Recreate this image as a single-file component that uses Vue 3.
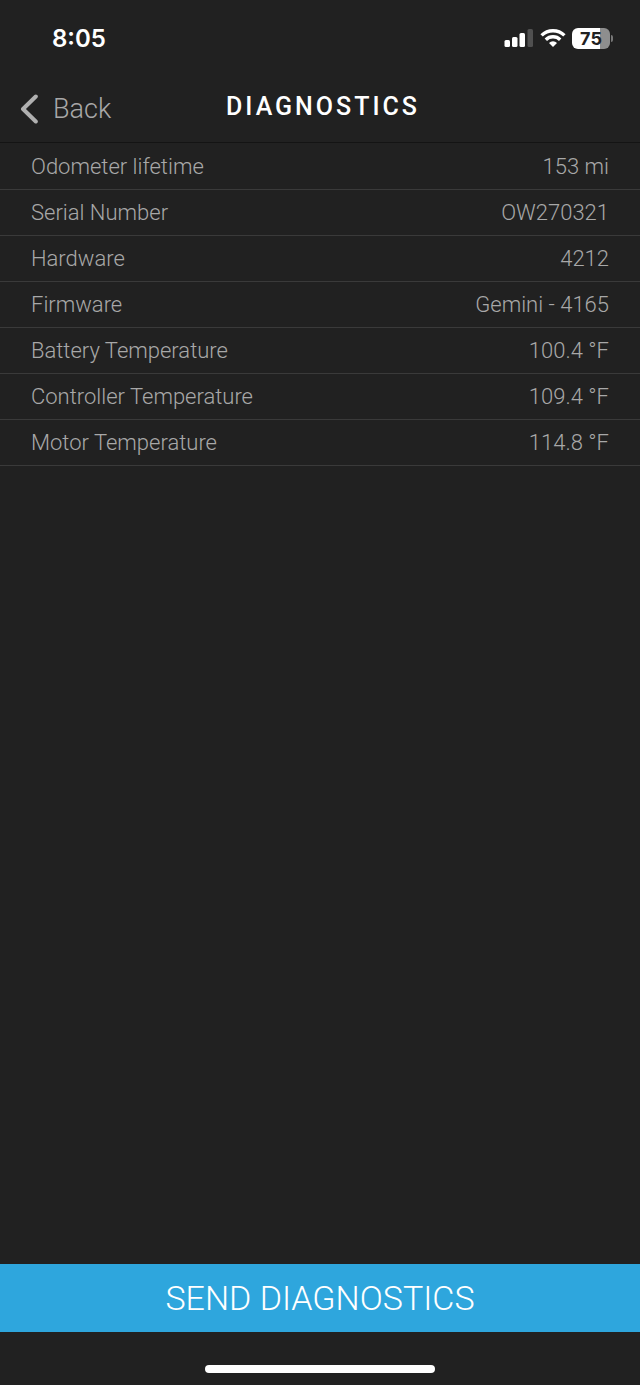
<template>
  <div class="diagnostics-page">
    <div class="status-bar">
      <span class="status-time">8:05</span>
      <div class="status-icons">
        <svg class="signal-icon" width="30" height="20" viewBox="0 0 30 20" aria-hidden="true">
          <rect x="0.5" y="12" width="5.5" height="7" rx="1.5" fill="#fff" />
          <rect x="8" y="9" width="5.5" height="10" rx="1.5" fill="#fff" />
          <rect x="15.5" y="5" width="5.5" height="14" rx="1.5" fill="#fff" />
          <rect x="23.5" y="1" width="5.5" height="18" rx="1.5" fill="#505050" />
        </svg>
        <svg class="wifi-icon" width="26" height="20" viewBox="0 0 26 20" aria-hidden="true">
          <g fill="none" stroke="#fff" stroke-width="3.4">
            <path d="M1.6 7.4a16.2 16.2 0 0 1 22.8 0" />
            <path d="M5.8 11.8a10.2 10.2 0 0 1 14.4 0" />
          </g>
          <path d="M13 19l-4-4a5.7 5.7 0 0 1 8 0z" fill="#fff" />
        </svg>
        <div class="battery">
          <span class="battery-body">{{ batteryLevel }}</span>
          <span class="battery-cap"></span>
        </div>
      </div>
    </div>

    <header class="nav-bar">
      <button type="button" class="back-button">
        <svg width="18" height="30" viewBox="0 0 18 30" aria-hidden="true">
          <path
            d="M15.8 2.5L3 15l12.8 12.5"
            fill="none"
            stroke="#b0b0b0"
            stroke-width="4"
            stroke-linecap="round"
            stroke-linejoin="round"
          />
        </svg>
        <span>Back</span>
      </button>
      <h1>DIAGNOSTICS</h1>
    </header>

    <dl class="info-list">
      <div v-for="item in items" :key="item.label" class="info-row">
        <dt>{{ item.label }}</dt>
        <dd>{{ item.value }}</dd>
      </div>
    </dl>

    <footer class="page-footer">
      <button type="button" class="send-button">SEND DIAGNOSTICS</button>
      <div class="home-indicator"></div>
    </footer>
  </div>
</template>

<script setup>
import { ref } from 'vue'

const batteryLevel = ref(75)

const items = ref([
  { label: 'Odometer lifetime', value: '153 mi' },
  { label: 'Serial Number', value: 'OW270321' },
  { label: 'Hardware', value: '4212' },
  { label: 'Firmware', value: 'Gemini - 4165' },
  { label: 'Battery Temperature', value: '100.4 °F' },
  { label: 'Controller Temperature', value: '109.4 °F' },
  { label: 'Motor Temperature', value: '114.8 °F' },
])
</script>

<style>
body {
  margin: 0;
  background-color: #212121;
}
</style>

<style scoped>
.diagnostics-page {
  display: flex;
  flex-direction: column;
  min-height: 100vh;
  background-color: #212121;
  color: #a8a8a8;
  font-family: Roboto, 'Liberation Sans', sans-serif;
  font-weight: 300;
}

.status-bar {
  display: flex;
  align-items: center;
  justify-content: space-between;
  height: 76px;
  padding: 0 27px 0 52px;
}

.status-time {
  color: #fff;
  font-family: Inter, 'Liberation Sans', sans-serif;
  font-size: 24px;
  font-weight: 600;
}

.status-icons {
  display: flex;
  align-items: center;
  gap: 6px;
}

.battery {
  display: flex;
  align-items: center;
  gap: 1px;
}

.battery-body {
  width: 38px;
  height: 21px;
  border-radius: 6px;
  background: linear-gradient(to right, #fff 75%, #8e8e8e 75%);
  color: #212121;
  font-family: Inter, 'Liberation Sans', sans-serif;
  font-size: 18px;
  font-weight: 700;
  line-height: 21px;
  text-align: center;
}

.battery-cap {
  width: 2px;
  height: 7px;
  border-radius: 0 2px 2px 0;
  background-color: #777;
}

.nav-bar {
  display: grid;
  grid-template-columns: 1fr auto 1fr;
  align-items: center;
  height: 66px;
  padding: 0 20px;
  border-bottom: 1px solid #141414;
}

.back-button {
  display: flex;
  align-items: center;
  justify-self: start;
  gap: 15px;
  padding: 0;
  border: none;
  background: none;
  color: #a8a8a8;
  font-family: inherit;
  font-size: 27px;
  font-weight: 300;
  line-height: 32px;
  cursor: pointer;
}

/* left padding balances the tracking after the last letter */
.nav-bar h1 {
  margin: 0;
  padding: 0 0 4px 6px;
  color: #fff;
  font-size: 25px;
  font-weight: 500;
  line-height: 32px;
  letter-spacing: 3px;
}

.info-list {
  flex: 1;
  margin: 0;
  padding-top: 1px;
}

.info-row {
  display: flex;
  align-items: center;
  justify-content: space-between;
  padding: 0 31px;
  border-bottom: 1px solid #3a3a3a;
  font-size: 22px;
  line-height: 45px;
}

.info-row dd {
  margin: 0;
}

.send-button {
  display: block;
  width: 100%;
  height: 68px;
  padding: 0;
  border: none;
  background-color: #2ea6dd;
  color: #fff;
  font-family: inherit;
  font-size: 34px;
  font-weight: 300;
  cursor: pointer;
}

.home-indicator {
  width: 36%;
  height: 8px;
  margin: 33px auto 12px;
  border-radius: 4px;
  background-color: #fff;
}
</style>
